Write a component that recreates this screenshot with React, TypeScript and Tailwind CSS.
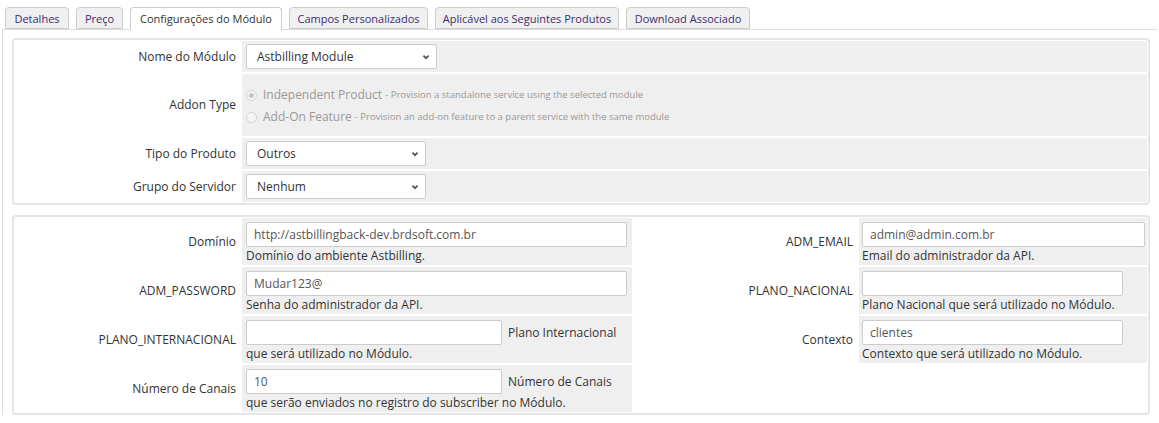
import type { ReactNode } from 'react';

const tabs: [string, string][] = [
  ['Detalhes', 'w-[64px]'],
  ['Preço', 'w-[47px]'],
  ['Configurações do Módulo', 'w-[152px]'],
  ['Campos Personalizados', 'w-[139px]'],
  ['Aplicável aos Seguintes Produtos', 'w-[184px]'],
  ['Download Associado', 'w-[124px]'],
];

function Chevron() {
  return (
    <svg viewBox="0 0 10 10" className="h-[8px] w-[8px]">
      <path d="M1.8 3.3 L5 6.5 L8.2 3.3" fill="none" stroke="#555" strokeWidth="2.2" />
    </svg>
  );
}

function Select({ value, width }: { value: string; width: string }) {
  return (
    <div
      className={`${width} flex h-[25px] items-center justify-between rounded-[2px] border border-[#ccc] bg-white pl-[10px] pr-[6px] text-[12px] text-[#333]`}
    >
      <span>{value}</span>
      <Chevron />
    </div>
  );
}

function Input({ value, width }: { value?: string; width: string }) {
  return (
    <div
      className={`${width} flex h-[25px] shrink-0 items-center rounded-[2px] border border-[#ccc] bg-white px-[7px] text-[12px] text-[#555]`}
    >
      {value}
    </div>
  );
}

function Radio({ checked, title, note }: { checked?: boolean; title: string; note: string }) {
  return (
    <div className="flex h-[22px] items-center text-[#999]">
      <span className="mr-[6px] flex h-[11px] w-[11px] items-center justify-center rounded-full border border-[#d2d2d2] bg-[#f6f6f6]">
        {checked && <span className="h-[5px] w-[5px] rounded-full bg-[#c4c4c4]" />}
      </span>
      <span className="mr-[3px] text-[12px]">{title}</span>
      <span className="text-[9.5px]">- {note}</span>
    </div>
  );
}

function Label({ children, width = 'w-[225px]' }: { children?: ReactNode; width?: string }) {
  return (
    <div className={`${width} flex shrink-0 items-center justify-end pr-1 text-[12px] text-[#333]`}>
      {children}
    </div>
  );
}

export default function App() {
  return (
    <div className="h-[423px] w-[1159px] overflow-hidden bg-white px-[2px] font-['Open_Sans',sans-serif]">
      <div className="relative z-10 flex gap-[7px] pl-[3px] pt-[7px]">
        {tabs.map(([t, w], i) => (
          <div
            key={t}
            className={
              i === 2
                ? `${w} h-[23px] rounded-t-[4px] border border-b-0 border-[#ccc] bg-white pt-[3px] text-center text-[11px] text-[#333]`
                : `${w} h-[22px] rounded-t-[4px] border border-[#ccc] bg-[#f0f0f0] pt-[3px] text-center text-[11px] text-[#3b2d72]`
            }
          >
            {t}
          </div>
        ))}
      </div>
      <div className="-mt-px border-l border-t border-[#ddd] pl-[9px] pr-[7px] pt-[8px]">
        {/* module selection */}
        <div className="flex flex-col gap-0.5 rounded-[4px] border-2 border-[#e2e6e9] p-px">
          <div className="flex h-[31px] gap-0.5">
            <Label>Nome do Módulo</Label>
            <div className="flex flex-1 items-center bg-[#efefef] pl-1">
              <Select value="Astbilling Module" width="w-[191px]" />
            </div>
          </div>
          <div className="flex h-[62px] gap-0.5">
            <Label>Addon Type</Label>
            <div className="flex flex-1 flex-col justify-center bg-[#efefef] pl-1 pt-[2px]">
              <Radio checked title="Independent Product" note="Provision a standalone service using the selected module" />
              <Radio title="Add-On Feature" note="Provision an add-on feature to a parent service with the same module" />
            </div>
          </div>
          <div className="flex h-[31px] gap-0.5">
            <Label>Tipo do Produto</Label>
            <div className="flex flex-1 items-center bg-[#efefef] pl-1">
              <Select value="Outros" width="w-[180px]" />
            </div>
          </div>
          <div className="flex h-[31px] gap-0.5">
            <Label>Grupo do Servidor</Label>
            <div className="flex flex-1 items-center bg-[#efefef] pl-1">
              <Select value="Nenhum" width="w-[180px]" />
            </div>
          </div>
        </div>

        {/* module settings */}
        <div className="mt-[10px] flex flex-col gap-0.5 rounded-[4px] border-2 border-[#e2e6e9] p-px text-[12px] text-[#333]">
          <div className="flex h-[47px] gap-0.5">
            <Label>Domínio</Label>
            <div className="w-[390px] shrink-0 bg-[#efefef] pl-1 pt-1">
              <Input value="http://astbillingback-dev.brdsoft.com.br" width="w-[381px]" />
              <div className="leading-[18px]">Domínio do ambiente Astbilling.</div>
            </div>
            <Label width="w-[223px]">ADM_EMAIL</Label>
            <div className="flex-1 bg-[#efefef] pl-[3px] pt-1">
              <Input value="admin@admin.com.br" width="w-[283px]" />
              <div className="leading-[18px]">Email do administrador da API.</div>
            </div>
          </div>
          <div className="flex h-[47px] gap-0.5">
            <Label>ADM_PASSWORD</Label>
            <div className="w-[390px] shrink-0 bg-[#efefef] pl-1 pt-1">
              <Input value="Mudar123@" width="w-[381px]" />
              <div className="leading-[18px]">Senha do administrador da API.</div>
            </div>
            <Label width="w-[223px]">PLANO_NACIONAL</Label>
            <div className="flex-1 bg-[#efefef] pl-[3px] pt-1">
              <Input width="w-[261px]" />
              <div className="leading-[18px]">Plano Nacional que será utilizado no Módulo.</div>
            </div>
          </div>
          <div className="flex h-[47px] gap-0.5">
            <Label>PLANO_INTERNACIONAL</Label>
            <div className="w-[390px] shrink-0 bg-[#efefef] pl-1 pt-1">
              <div className="flex items-center gap-[6px]">
                <Input width="w-[256px]" />
                <span>Plano Internacional</span>
              </div>
              <div className="leading-[18px]">que será utilizado no Módulo.</div>
            </div>
            <Label width="w-[223px]">Contexto</Label>
            <div className="flex-1 bg-[#efefef] pl-[3px] pt-1">
              <Input value="clientes" width="w-[261px]" />
              <div className="leading-[18px]">Contexto que será utilizado no Módulo.</div>
            </div>
          </div>
          <div className="flex h-[47px] gap-0.5">
            <Label>Número de Canais</Label>
            <div className="w-[390px] shrink-0 bg-[#efefef] pl-1 pt-1">
              <div className="flex items-center gap-[6px]">
                <Input value="10" width="w-[256px]" />
                <span>Número de Canais</span>
              </div>
              <div className="leading-[18px]">que serão enviados no registro do subscriber no Módulo.</div>
            </div>
            <Label width="w-[223px]" />
            <div className="flex-1" />
          </div>
        </div>
      </div>
    </div>
  );
}
